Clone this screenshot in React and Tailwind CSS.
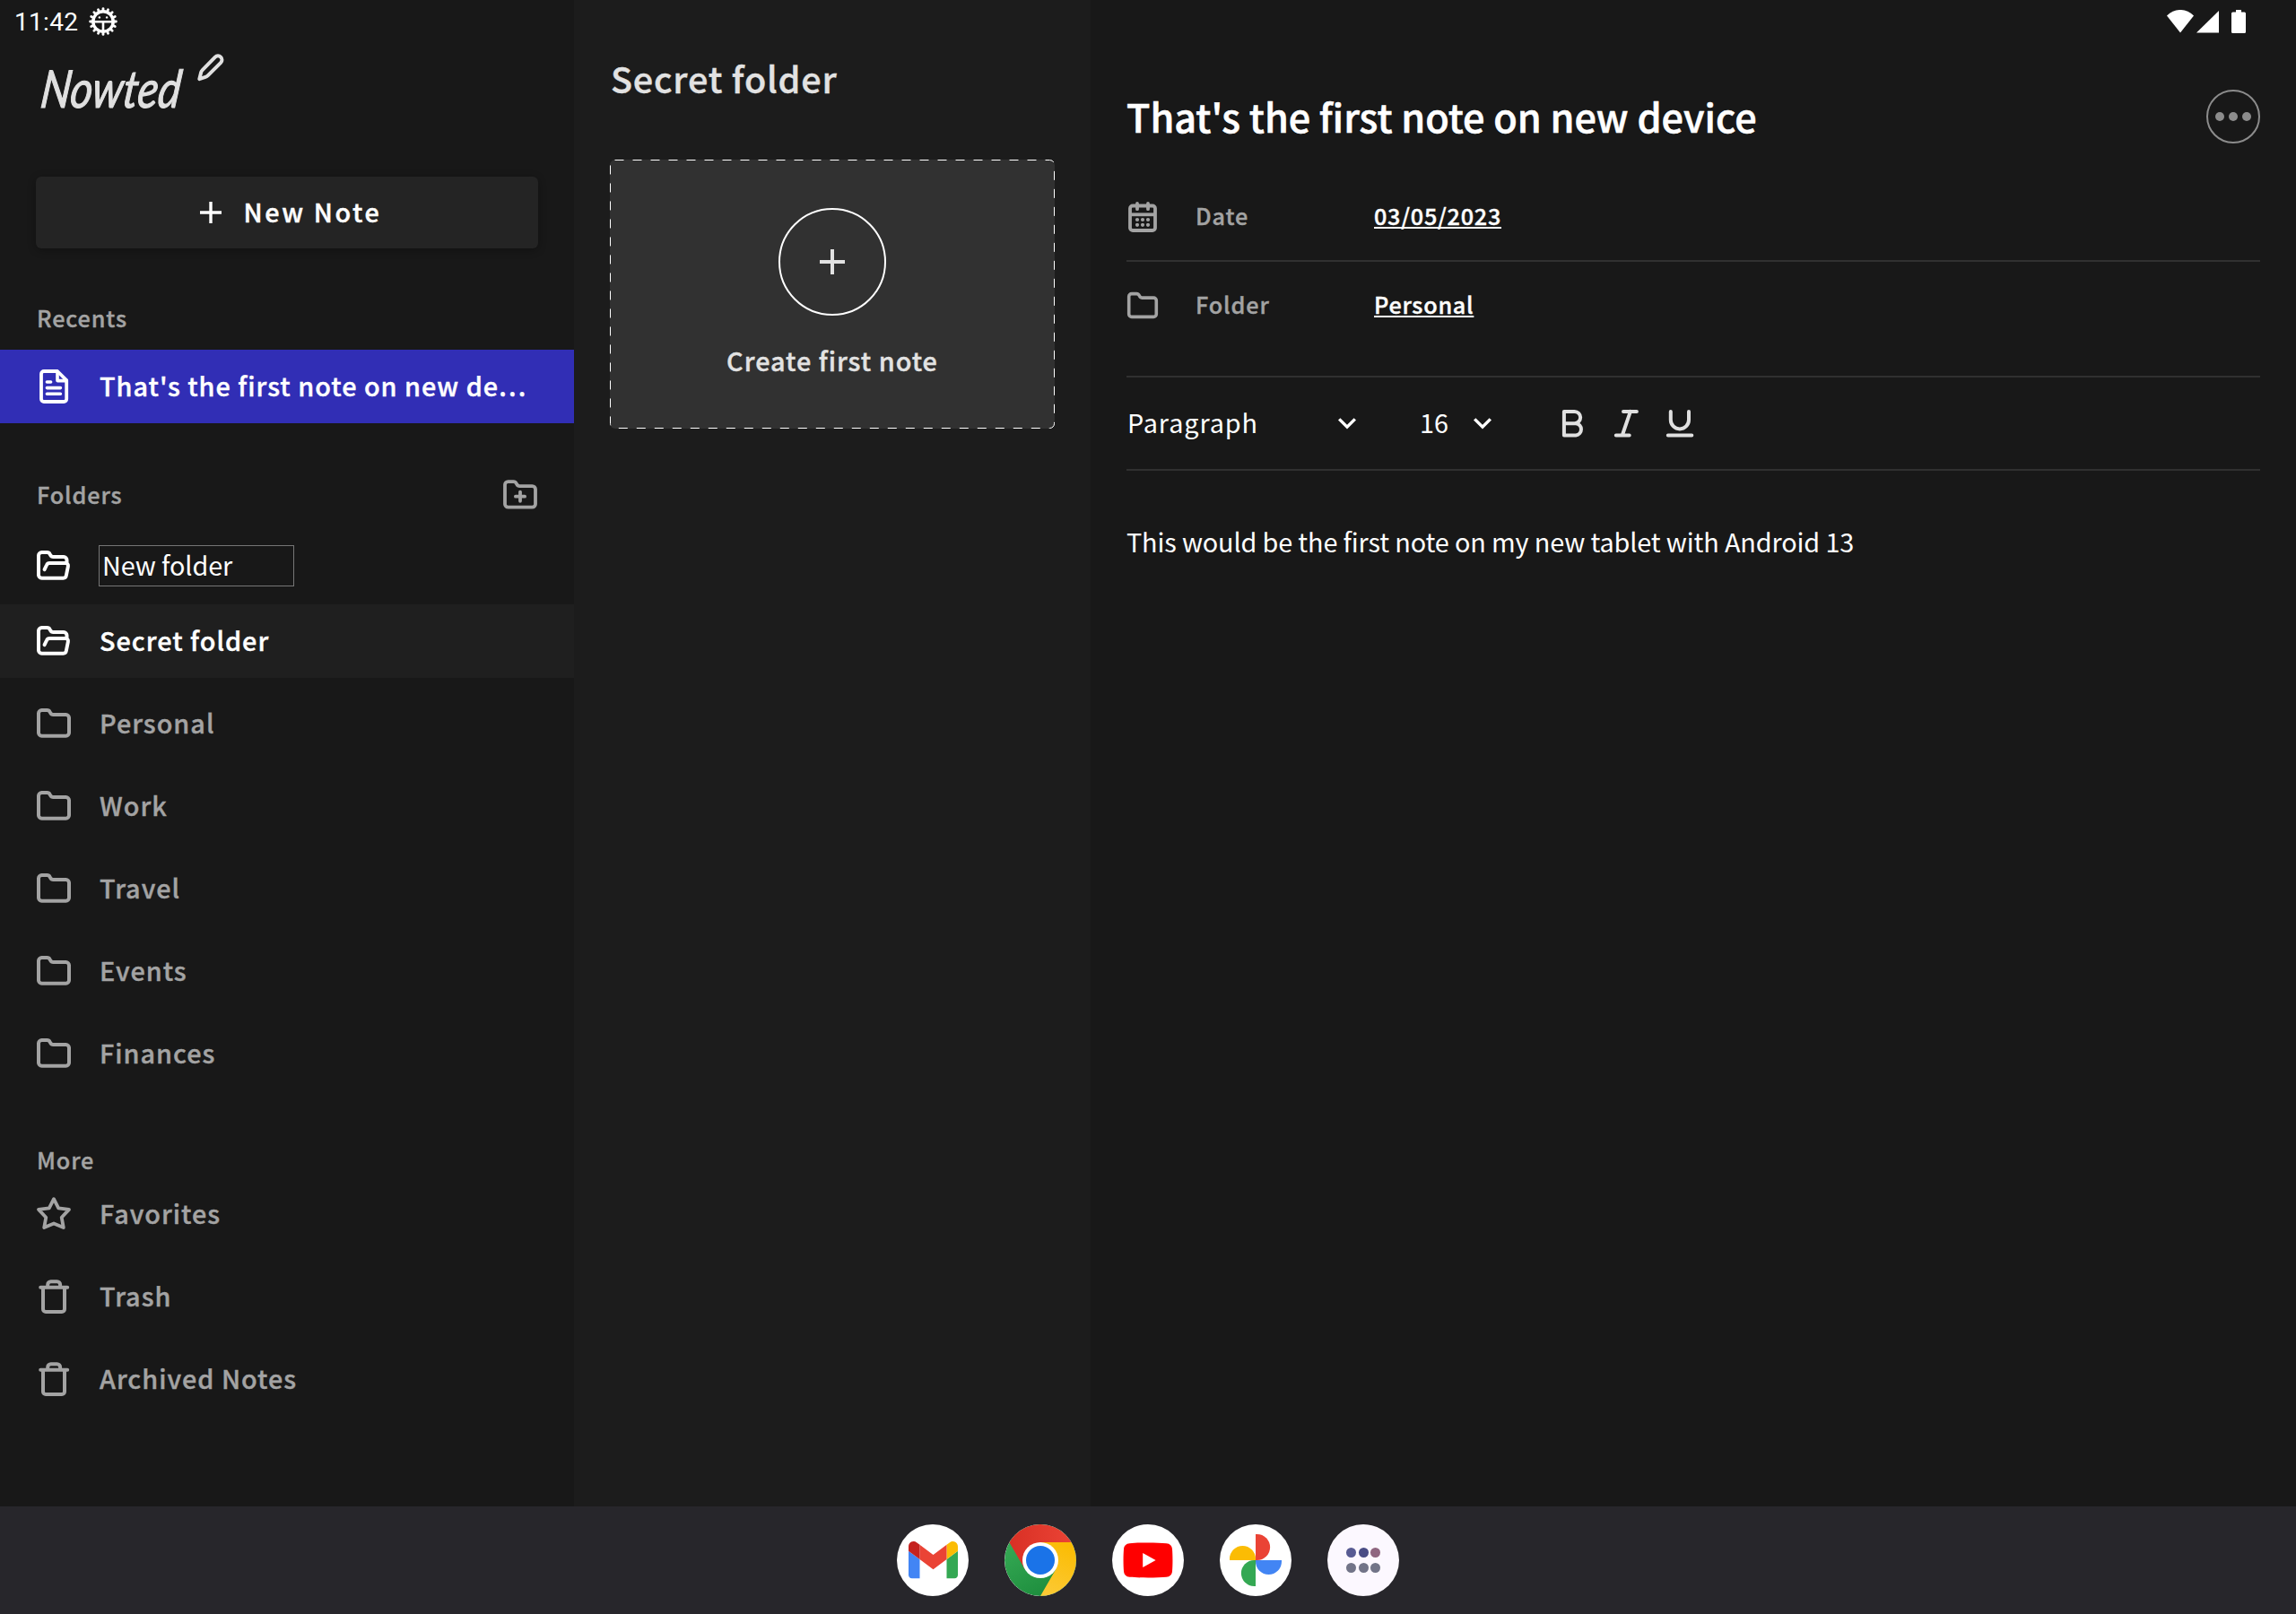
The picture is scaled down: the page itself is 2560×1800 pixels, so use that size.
import React from "react";

const FOLDER_TAB =
  "M3 8.6a3.5 3.5 0 0 1 3.5-3.5h6c1.6 0 2.6.8 3.3 2.2l.3.6c.7 1.4 1.7 2.2 3.3 2.2h14.1a3.5 3.5 0 0 1 3.5 3.5v16.6a3.5 3.5 0 0 1-3.5 3.5h-27a3.5 3.5 0 0 1-3.5-3.5z";

function Icon({ size = 40, children, width = 4 }) {
  return (
    <svg
      width={size}
      height={size}
      viewBox="0 0 40 40"
      fill="none"
      stroke="currentColor"
      strokeWidth={width}
      strokeLinecap="round"
      strokeLinejoin="round"
      className="shrink-0"
    >
      {children}
    </svg>
  );
}

const FolderIcon = ({ size }) => (
  <Icon size={size}>
    <path d={FOLDER_TAB} />
  </Icon>
);

const FolderOpenIcon = () => (
  <Icon>
    <path d="M34.5 17v-3.4a3.5 3.5 0 0 0-3.5-3.5H19.4c-1.6 0-2.6-.8-3.3-2.2l-.3-.6c-.7-1.4-1.7-2.2-3.3-2.2h-6A3.5 3.5 0 0 0 3 8.6v21.6a3.5 3.5 0 0 0 3.5 3.5h24.1c1.6 0 2.9-1.1 3.2-2.7l2.1-10.4c.4-2-.9-3.6-2.8-3.6H15.2a3.4 3.4 0 0 0-3.1 2L9.6 24.2" />
  </Icon>
);

const FolderPlusIcon = () => (
  <Icon width={3.8}>
    <path d={FOLDER_TAB} />
    <path d="M20 16.6v10.2M14.9 21.7h10.2" />
  </Icon>
);

const FileIcon = () => (
  <Icon width={3.8}>
    <path d="M24 3H9a3 3 0 0 0-3 3v28a3 3 0 0 0 3 3h22.2a3 3 0 0 0 3-3V13.2z" />
    <path d="M24 3.4v10.2h10M12.4 15h4.2M12.4 21.6h15M12.4 28.2h15" strokeWidth="3.6" />
  </Icon>
);

const StarIcon = () => (
  <Icon width={3.8}>
    <path d="M20 3.2l5.2 10.2 11.8 1.5-8.3 8.8 2.1 11.4L20 30.4 9.2 35.1l2.1-11.4L3 14.9l11.8-1.5z" />
  </Icon>
);

const TrashIcon = () => (
  <Icon width={4}>
    <path d="M5.2 9.8h30M8 9.8V34a3 3 0 0 0 3 3h18a3 3 0 0 0 3-3V9.8M13.2 9.3V6.7a3.5 3.5 0 0 1 3.5-3.5h6.9a3.5 3.5 0 0 1 3.5 3.5v2.6" />
  </Icon>
);

function CalendarIcon() {
  return (
    <svg width="36" height="36" viewBox="0 0 36 36" fill="none" stroke="currentColor" strokeWidth="3.8" strokeLinecap="round" className="shrink-0">
      <rect x="4" y="5.5" width="28" height="27.5" rx="3" />
      <path d="M4 15.3h28" strokeLinecap="butt" />
      <path d="M12 3v6.2M24 3v6.2" />
      <g fill="currentColor" stroke="none">
        {[21, 26.8].map((y) => [12, 18, 24].map((x) => <circle key={x + "-" + y} cx={x} cy={y} r="2.1" />))}
      </g>
    </svg>
  );
}

const Chevron = () => (
  <svg width="24" height="16" viewBox="0 0 24 16" fill="none" stroke="white" strokeWidth="3.4" className="shrink-0">
    <path d="M3.2 3.4L12 12.2l8.8-8.8" />
  </svg>
);

function Logo() {
  return (
    <svg width="230" height="80" viewBox="0 0 230 80" className="text-[#e0e0e0]">
      <text
        x="5"
        y="67.5"
        textLength="156"
        lengthAdjust="spacingAndGlyphs"
        fill="currentColor"
        stroke="currentColor"
        strokeWidth="1.1"
        fontSize="58"
        transform="translate(9 0) skewX(-7)"
        className="font-['Lato'] italic"
      >
        Nowted
      </text>
      <path
        d="M184.3 35.2l1.8-7.3c.3-1.1.8-2 1.6-2.8l14.2-14.5a4.4 4.4 0 0 1 6.3 6.2l-14.3 14.3c-.8.8-1.7 1.3-2.8 1.7z"
        fill="none"
        stroke="currentColor"
        strokeWidth="4"
        strokeLinejoin="round"
      />
    </svg>
  );
}

function DebugIcon() {
  const teeth = Array.from({ length: 16 }, (_, i) => i * 22.5);
  return (
    <svg width="32" height="32" viewBox="0 0 32 32" fill="none" stroke="white">
      <circle cx="16" cy="16" r="11.2" strokeWidth="3.4" />
      {teeth.map((a) => (
        <path key={a} d="M16 1.6v3.2" strokeWidth="2.8" strokeLinecap="round" transform={`rotate(${a} 16 16)`} />
      ))}
      <path d="M5 16.2h22M16 16v11" strokeWidth="2.6" />
      <circle cx="11.9" cy="11.4" r="1.2" fill="white" stroke="none" />
      <circle cx="20.1" cy="11.4" r="1.2" fill="white" stroke="none" />
    </svg>
  );
}

function StatusBar() {
  return (
    <div className="absolute inset-x-0 top-0 flex h-12 items-center justify-between pl-4 pr-[56px]">
      <div className="flex items-center gap-3">
        <span className="pt-[2px] font-['Roboto'] text-[28px] leading-[48px] tracking-[0.3px]">11:42</span>
        <DebugIcon />
      </div>
      <svg width="88" height="26" viewBox="0 0 88 26" fill="white">
        <path d="M0 6.5C8.8-2.2 21.2-2.2 30 6.5L15 25.5z" />
        <path d="M58 1v24.5H33z" />
        <path d="M77 0h6v2.5h3.5a1.5 1.5 0 0 1 1.5 1.5v20.5a1.5 1.5 0 0 1-1.5 1.5h-13a1.5 1.5 0 0 1-1.5-1.5V4a1.5 1.5 0 0 1 1.5-1.5H77z" />
      </svg>
    </div>
  );
}

function SectionLabel({ children, className = "" }) {
  return (
    <span
      className={
        "pl-[1px] text-[25.2px] leading-[40px] font-medium tracking-[0.9px] text-[#a3a3a3] [-webkit-text-stroke:0.4px_currentColor] " +
        className
      }
    >
      {children}
    </span>
  );
}

function NavRow({ icon, children, className = "text-[#a3a3a3]" }) {
  return (
    <div className={"flex h-[82px] items-center gap-[31px] px-10 " + className}>
      {icon}
      <span className="pb-[3px] text-[28.8px] leading-[42px] font-medium tracking-[1px] whitespace-nowrap [-webkit-text-stroke:0.4px_currentColor]">
        {children}
      </span>
    </div>
  );
}

function Sidebar() {
  return (
    <aside className="flex w-[640px] shrink-0 flex-col bg-[#181818]">
      <div className="mt-[53px] ml-[38px] h-[80px]">
        <Logo />
      </div>
      <button className="mx-10 mt-16 flex h-20 items-center justify-center gap-[25px] rounded-[6px] bg-[#242424] pl-[8px] shadow-[0_2px_10px_rgba(0,0,0,0.3)]">
        <svg width="24" height="24" viewBox="0 0 24 24" stroke="white" strokeWidth="3.4">
          <path d="M12 0v24M0 12h24" />
        </svg>
        <span className="pb-[3px] text-[28.8px] leading-[42px] font-medium tracking-[2.6px] [-webkit-text-stroke:0.4px_currentColor]">
          New Note
        </span>
      </button>

      <div className="mt-[57px] flex h-10 items-center px-10">
        <SectionLabel>Recents</SectionLabel>
      </div>
      <NavRow icon={<FileIcon />} className="mt-4 bg-[#312eb5] text-white">
        That's the first note on new de<span className="tracking-[2.2px]">...</span>
      </NavRow>

      <div className="mt-[60px] flex h-10 items-center justify-between px-10">
        <SectionLabel className="pb-[2px]">Folders</SectionLabel>
        <span className="text-[#a3a3a3]">
          <FolderPlusIcon />
        </span>
      </div>
      <div className="mt-[18px] flex h-[82px] items-center gap-[30px] px-10">
        <FolderOpenIcon />
        <div className="h-[46px] w-[218px] border border-[#767676] pl-[3px] text-[28.8px] leading-[42px] tracking-[-0.1px]">
          New folder
        </div>
      </div>
      <NavRow icon={<FolderOpenIcon />} className="mt-[2px] bg-[#1f1f1f] text-white">
        Secret folder
      </NavRow>
      <div className="mt-[10px] flex flex-col gap-[10px]">
        {["Personal", "Work", "Travel", "Events", "Finances"].map((name) => (
          <NavRow key={name} icon={<FolderIcon />}>
            {name}
          </NavRow>
        ))}
      </div>

      <div className="mt-[57px] flex h-10 items-center px-10">
        <SectionLabel>More</SectionLabel>
      </div>
      <div className="flex flex-col gap-[10px]">
        <NavRow icon={<StarIcon />}>Favorites</NavRow>
        <NavRow icon={<TrashIcon />}>Trash</NavRow>
        <NavRow icon={<TrashIcon />}>Archived Notes</NavRow>
      </div>
    </aside>
  );
}

function NoteList() {
  return (
    <section className="flex w-[576px] shrink-0 flex-col bg-[#1c1c1c] px-10 pt-[61px] text-[#e2e2e2]">
      <h1 className="h-[52px] pl-px text-[39.6px] leading-[52px] font-medium tracking-[0.8px] [-webkit-text-stroke:0.4px_currentColor]">
        Secret folder
      </h1>
      <div className="relative mt-[65px] flex h-[300px] w-[496px] flex-col items-center rounded-[6px] bg-[#313131] pt-[54px]">
        <svg className="absolute inset-0" width="496" height="300" fill="none" stroke="white">
          <rect x="0.5" y="0.5" width="495" height="299" rx="5" strokeDasharray="10 10" />
        </svg>
        <div className="flex size-[120px] items-center justify-center rounded-full border-2 border-white">
          <svg width="28" height="28" viewBox="0 0 28 28" stroke="currentColor" strokeWidth="4">
            <path d="M14 0v28M0 14h28" />
          </svg>
        </div>
        <div className="mt-[30px] text-[28.8px] leading-[40px] font-medium tracking-[1px] [-webkit-text-stroke:0.4px_currentColor]">
          Create first note
        </div>
      </div>
    </section>
  );
}

function MetaRow({ icon, label, value, className }) {
  return (
    <div className={"flex items-center text-[25.2px] leading-[38px] font-medium [-webkit-text-stroke:0.4px_currentColor] " + className}>
      <span className="flex w-[77px] text-[#a3a3a3]">{icon}</span>
      <span className="w-[199px] pb-[4px] tracking-[0.9px] text-[#a3a3a3]">{label}</span>
      <span className="pb-[4px] tracking-[0.75px] underline decoration-2 underline-offset-[2px] [text-decoration-skip-ink:none]">
        {value}
      </span>
    </div>
  );
}

function Editor() {
  return (
    <main className="flex grow flex-col bg-[#181818] px-10 pt-[100px]">
      <div className="flex h-[60px] items-center justify-between">
        <h2 className="pb-[2px] text-[43.2px] leading-[56px] font-medium [-webkit-text-stroke:0.6px_currentColor]">
          That's the first note on new device
        </h2>
        <div className="flex size-[60px] items-center justify-center gap-[5px] rounded-full border-2 border-[#8c8c8c]">
          <i className="size-[10px] rounded-full bg-[#8c8c8c]" />
          <i className="size-[10px] rounded-full bg-[#8c8c8c]" />
          <i className="size-[10px] rounded-full bg-[#8c8c8c]" />
        </div>
      </div>

      <MetaRow className="mt-[34px] h-[96px]" icon={<CalendarIcon />} label="Date" value="03/05/2023" />
      <div className="h-[2px] bg-[#303030]" />
      <MetaRow className="h-[98px]" icon={<FolderIcon size={36} />} label="Folder" value="Personal" />

      <div className="mt-[29px] flex h-[106px] items-center border-y-2 border-[#303030] text-[28.8px] leading-[40px]">
        <span className="w-[234px] pb-[2px] pl-px tracking-[0.9px]">Paragraph</span>
        <Chevron />
        <span className="ml-[69px] w-[58px] pb-[2px]">16</span>
        <Chevron />
        <svg
          width="152"
          height="36"
          viewBox="0 0 152 36"
          fill="none"
          stroke="#e0e0e0"
          strokeWidth="4"
          strokeLinecap="round"
          strokeLinejoin="round"
          className="ml-[74px]"
        >
          <path d="M4.9 4.9h11.6a6.6 6.6 0 0 1 0 13.3H4.9zM4.9 18.2h13.2a6.7 6.7 0 0 1 0 13.3H4.9z" />
          <path d="M71 4.9h14.9M62.8 31.5h14.9M78.9 4.9l-9.1 26.6" />
          <path d="M123.8 4.9v9.4a10.1 10.1 0 0 0 20.2 0V4.9M120.8 31.5h26.5" />
        </svg>
      </div>

      <p className="mt-[59px] text-[28.8px] leading-[40px] tracking-[-0.13px]">
        This would be the first note on my new tablet with Android 13
      </p>
    </main>
  );
}

function DockCircle({ children, className = "bg-white" }) {
  return <div className={"flex size-20 items-center justify-center overflow-hidden rounded-full " + className}>{children}</div>;
}

function Dock() {
  return (
    <footer className="flex h-[120px] items-center justify-center gap-10 bg-[#27262b]">
      <DockCircle>
        <svg width="55" height="41.25" viewBox="52 42 88 66" className="ml-[1px]">
          <path fill="#4285f4" d="M58 108h14V74L52 59v43c0 3.32 2.69 6 6 6" />
          <path fill="#34a853" d="M120 108h14c3.32 0 6-2.69 6-6V59l-20 15" />
          <path fill="#fbbc04" d="M120 48v26l20-15v-8c0-7.42-8.47-11.65-14.4-7.2" />
          <path fill="#ea4335" d="M72 74V48l24 18 24-18v26L96 92" />
          <path fill="#c5221f" d="M52 51v8l20 15V48l-5.6-4.2c-5.94-4.45-14.4-.22-14.4 7.2" />
        </svg>
      </DockCircle>
      <DockCircle>
        <svg width="80" height="80" viewBox="0 0 80 80">
          <defs>
            <linearGradient id="red" x1="0" x2="1">
              <stop offset="0" stopColor="#d93025" />
              <stop offset="1" stopColor="#ea4335" />
            </linearGradient>
            <linearGradient id="green" x1="0.1" y1="0.3" x2="0.5" y2="1">
              <stop offset="0" stopColor="#34a853" />
              <stop offset="1" stopColor="#1e8e3e" />
            </linearGradient>
            <linearGradient id="yellow" x1="0.3" y1="1" x2="0.6" y2="0">
              <stop offset="0" stopColor="#fcc934" />
              <stop offset="1" stopColor="#fbbc04" />
            </linearGradient>
          </defs>
          <circle cx="40" cy="40" r="40" fill="url(#green)" />
          <path fill="url(#yellow)" d="M74.64 20A40 40 0 0 1 40 80L57.32 50 40 40V20z" />
          <path fill="url(#red)" d="M5.36 20A40 40 0 0 1 74.64 20H40v20L22.68 50z" />
          <circle cx="40" cy="40" r="20" fill="white" />
          <circle cx="40" cy="40" r="16" fill="#1a73e8" />
        </svg>
      </DockCircle>
      <DockCircle>
        <svg width="56" height="40" viewBox="0 0 56 40">
          <path
            fill="#ff0000"
            d="M28 .5c8 0 15.5.2 20.5.7 4 .4 6.1 2.5 6.5 6.5.6 7 .6 17.6 0 24.6-.4 4-2.5 6.1-6.5 6.5-10 .9-31 .9-41 0-4-.4-6.1-2.5-6.5-6.5-.6-7-.6-17.6 0-24.6.4-4 2.5-6.1 6.5-6.5 5-.5 12.5-.7 20.5-.7z"
          />
          <path fill="white" d="M22.2 11.9v16.2l14.4-8.1z" />
        </svg>
      </DockCircle>
      <DockCircle>
        <svg width="58" height="58" viewBox="0 0 58 58">
          <path fill="#ea4335" d="M29 0h1.6a14.5 14.5 0 0 1 0 29H29z" />
          <path fill="#4285f4" d="M58 29v1.6a14.5 14.5 0 0 1-29 0V29z" />
          <path fill="#34a853" d="M29 58h-1.6a14.5 14.5 0 0 1 0-29H29z" />
          <path fill="#fbbc04" d="M0 29v-1.6a14.5 14.5 0 0 1 29 0V29z" />
        </svg>
      </DockCircle>
      <DockCircle className="bg-[#fcf8ff]">
        <div className="grid grid-cols-3 gap-x-[2.5px] gap-y-[5.2px]">
          <i className="size-[11px] rounded-full bg-[#585b93]" />
          <i className="size-[11px] rounded-full bg-[#4a4d85]" />
          <i className="size-[11px] rounded-full bg-[#8f6680]" />
          <i className="size-[11px] rounded-full bg-[#727488]" />
          <i className="size-[11px] rounded-full bg-[#727488]" />
          <i className="size-[11px] rounded-full bg-[#727488]" />
        </div>
      </DockCircle>
    </footer>
  );
}

export default function App() {
  return (
    <div className="relative flex h-[1800px] w-[2560px] flex-col overflow-hidden bg-[#181818] font-['Noto_Sans_CJK_SC',sans-serif] text-white">
      <div className="flex h-[1680px]">
        <Sidebar />
        <NoteList />
        <Editor />
      </div>
      <Dock />
      <StatusBar />
    </div>
  );
}
